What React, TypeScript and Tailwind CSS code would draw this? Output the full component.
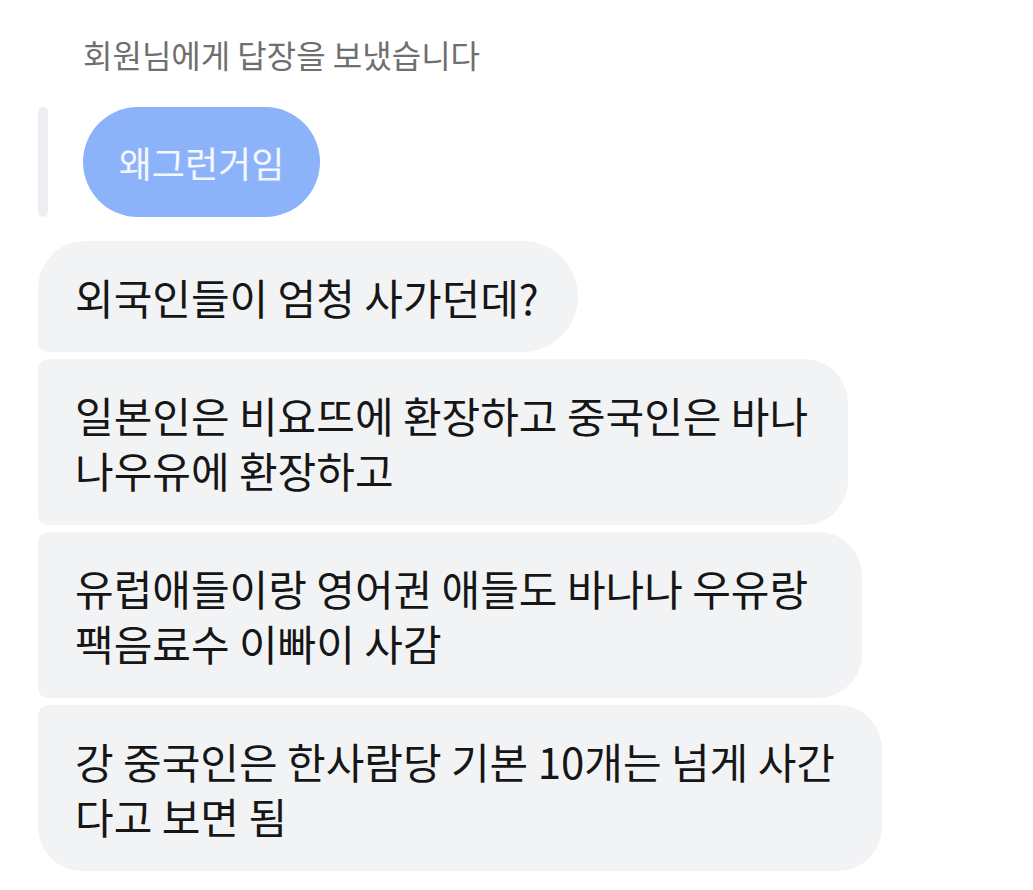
const messages = [
  { lines: ['외국인들이 엄청 사가던데?'], width: 'w-[540px]', corners: 'rounded-tl-[48px] rounded-tr-[56px] rounded-br-[56px] rounded-bl-[10px]' },
  { lines: ['일본인은 비요뜨에 환장하고 중국인은 바나', '나우유에 환장하고'], width: 'w-[810px]', corners: 'rounded-tl-[10px] rounded-tr-[44px] rounded-br-[44px] rounded-bl-[10px]' },
  { lines: ['유럽애들이랑 영어권 애들도 바나나 우유랑', '팩음료수 이빠이 사감'], width: 'w-[824px]', corners: 'rounded-tl-[10px] rounded-tr-[44px] rounded-br-[44px] rounded-bl-[10px]' },
  { lines: ['강 중국인은 한사람당 기본 10개는 넘게 사간', '다고 보면 됨'], width: 'w-[844px]', corners: 'rounded-tl-[10px] rounded-tr-[44px] rounded-br-[44px] rounded-bl-[44px]' },
];

export default function App() {
  return (
    <div
      className="w-[1033px] h-[890px] bg-white pl-[38px] pt-[34px] overflow-hidden"
      style={{ fontFamily: '"Noto Sans CJK KR", "Noto Sans", sans-serif' }}
    >
      {/* 답장 안내 */}
      <div className="pl-[45px] text-[32px] leading-[40px] text-[#6f6f6f]">회원님에게 답장을 보냈습니다</div>

      {/* 인용된 원본 메시지 */}
      <div className="flex items-stretch gap-[35px] mt-[33px]">
        <div className="w-[10px] rounded-full bg-[#eceef1]" />
        <div className="h-[110px] w-[237px] flex items-center justify-center rounded-full bg-[#8cb3fa] text-[36px] text-white/90">
          왜그런거임
        </div>
      </div>

      {/* 받은 메시지들 */}
      <div className="flex flex-col items-start gap-[7px] mt-[24px]">
        {messages.map((m, i) => (
          <div
            key={i}
            className={`bg-[#f2f3f5] pl-[37px] py-[28px] text-[42px] leading-[55px] text-[#161616] whitespace-nowrap ${m.width} ${m.corners}`}
          >
            {m.lines.map((l, j) => (
              <div key={j}>{l}</div>
            ))}
          </div>
        ))}
      </div>
    </div>
  );
}
